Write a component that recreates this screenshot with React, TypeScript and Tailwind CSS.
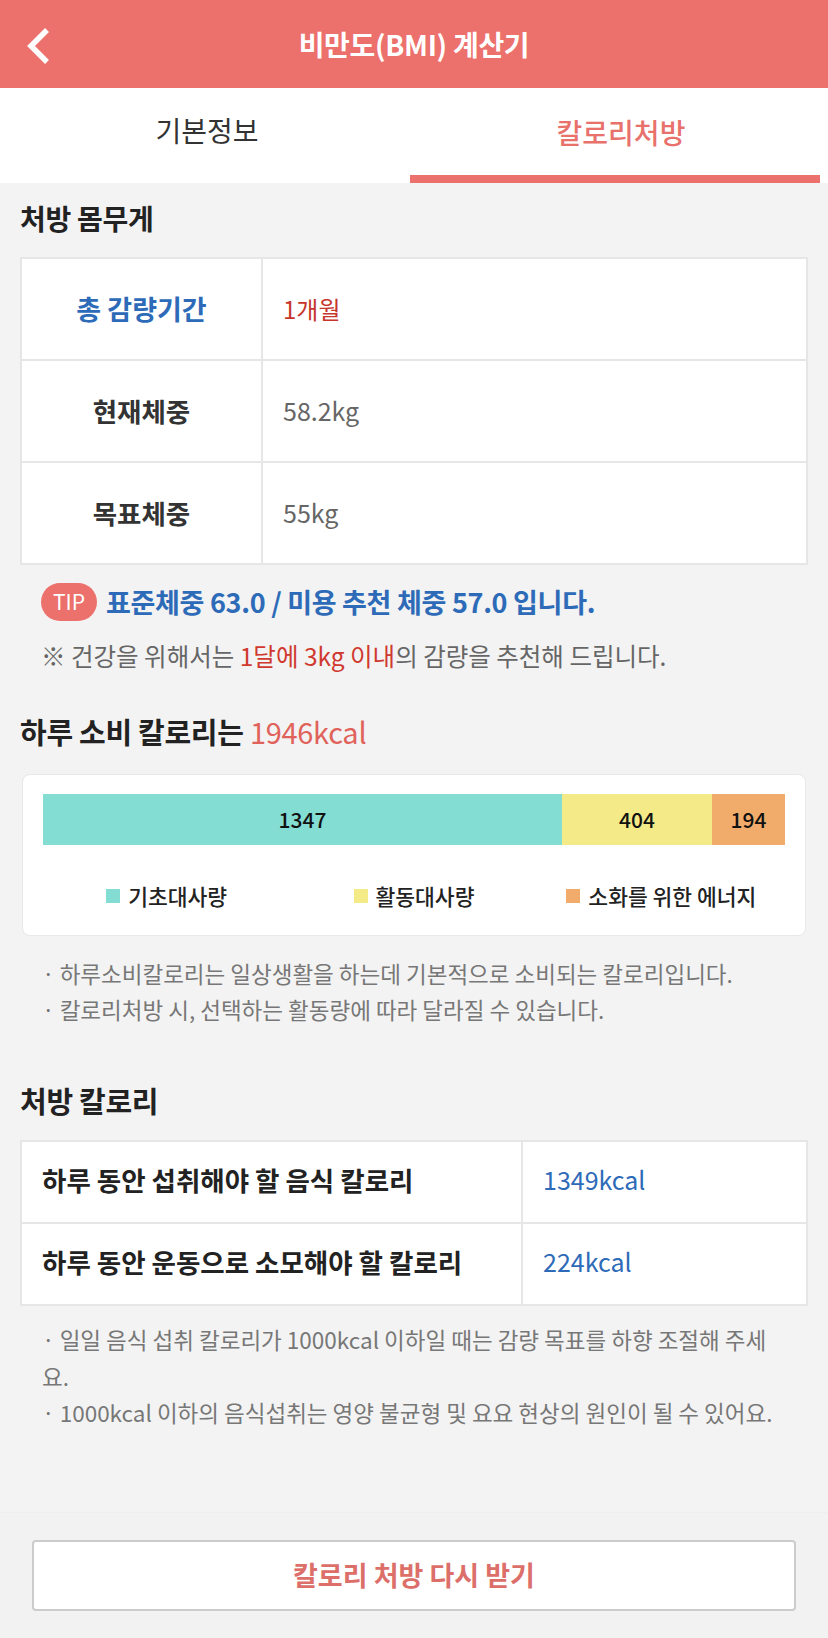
import React from "react";

const F = "font-['Noto_Sans_CJK_KR','Noto_Sans',sans-serif]";

function Header() {
  return (
    <div className="relative h-[88px] bg-[#EC706C] flex items-center justify-center">
      <svg className="absolute left-[24px] top-[27px]" width="28" height="38" viewBox="0 0 28 38">
        <polyline points="23,3 7,19 23,35" fill="none" stroke="#fff" strokeWidth="5.5" strokeLinecap="butt" strokeLinejoin="miter" />
      </svg>
      <div className="text-white text-[28px] font-semibold tracking-[-0.3px]">비만도(BMI) 계산기</div>
    </div>
  );
}

function Tabs() {
  return (
    <div className="h-[95px] bg-white flex">
      <div className="flex-1 flex items-center justify-center pb-[12px] text-[28px] text-[#333]">기본정보</div>
      <div className="flex-1 flex flex-col">
        <div className="flex-1 flex items-center justify-center text-[28px] text-[#E8716C] font-medium">칼로리처방</div>
        <div className="h-[8px] bg-[#EC706C] ml-[-4px] mr-[8px]" />
      </div>
    </div>
  );
}

export default function App() {
  return (
    <div className={`${F} w-[828px] min-h-[1638px] bg-[#F3F3F3] text-[#222]`}>
      <Header />
      <Tabs />
      <div className="px-[20px]">
        <div className="h-[70px] flex items-center text-[28px] font-semibold tracking-[-0.3px]">처방 몸무게</div>
        <table className="mt-[4px] w-[788px] border-collapse bg-white">
          <tbody>
            <tr className="h-[102px]">
              <td className="w-[241px] border-2 border-[#E6E6E6] text-center text-[27px] font-bold text-[#2D6BB8]">총 감량기간</td>
              <td className="border-2 border-[#E6E6E6] pl-[20px] text-[24px] text-[#C6362B]">1개월</td>
            </tr>
            <tr className="h-[102px]">
              <td className="border-2 border-[#E6E6E6] text-center text-[26.5px] font-bold text-[#333]">현재체중</td>
              <td className="border-2 border-[#E6E6E6] pl-[20px] text-[25px] text-[#666]">58.2kg</td>
            </tr>
            <tr className="h-[102px]">
              <td className="border-2 border-[#E6E6E6] text-center text-[26.5px] font-bold text-[#333]">목표체중</td>
              <td className="border-2 border-[#E6E6E6] pl-[20px] text-[25px] text-[#666]">55kg</td>
            </tr>
          </tbody>
        </table>
        <div className="h-[74px] flex items-center pl-[21px]">
          <span className="w-[56px] h-[38px] rounded-full bg-[#EC706C] text-white text-[21px] flex items-center justify-center">TIP</span>
          <span className="ml-[9px] text-[27px] font-bold text-[#2D6BB8] tracking-[-0.3px]">표준체중 63.0 / 미용 추천 체중 57.0 입니다.</span>
        </div>
        <div className="h-[34px] flex items-center pl-[21px] text-[24.5px] text-[#666]">
          ※ 건강을 위해서는&nbsp;<span className="text-[#D0392F]">1달에 3kg 이내</span>의 감량을 추천해 드립니다.
        </div>
        <div className="mt-[42px] h-[34px] flex items-center text-[29px] tracking-[-0.3px]">
          <span className="font-semibold">하루 소비 칼로리는&nbsp;</span>
          <span className="text-[#E0625A]">1946kcal</span>
        </div>
        <div className="mt-[25px] ml-[2px] w-[784px] bg-white rounded-[8px] border border-[#E8E8E8] px-[20px] pt-[19px] pb-[19px]">
          <div className="flex h-[51px] text-[21px] font-medium text-[#111]">
            <div className="w-[519px] bg-[#83DDD2] flex items-center justify-center">1347</div>
            <div className="w-[150px] bg-[#F4EA87] flex items-center justify-center">404</div>
            <div className="flex-1 bg-[#F1AC6C] flex items-center justify-center">194</div>
          </div>
          <div className="mt-[31px] h-[40px] grid grid-cols-3 text-[21.5px] font-medium text-[#222]">
            <div className="flex items-center justify-center gap-[8px]">
              <span className="w-[14px] h-[14px] bg-[#83DDD2]" />기초대사량
            </div>
            <div className="flex items-center justify-center gap-[8px]">
              <span className="w-[14px] h-[14px] bg-[#F4EA87]" />활동대사량
            </div>
            <div className="flex items-center justify-center gap-[8px]">
              <span className="w-[14px] h-[14px] bg-[#F1AC6C]" />소화를 위한 에너지
            </div>
          </div>
        </div>
        <div className="mt-[19px] pl-[22px] text-[22.5px] leading-[36px] text-[#777]">
          <div>· 하루소비칼로리는 일상생활을 하는데 기본적으로 소비되는 칼로리입니다.</div>
          <div>· 칼로리처방 시, 선택하는 활동량에 따라 달라질 수 있습니다.</div>
        </div>
        <div className="mt-[57px] h-[34px] flex items-center text-[29px] font-semibold tracking-[-0.3px]">처방 칼로리</div>
        <table className="mt-[22px] w-[788px] border-collapse bg-white">
          <tbody>
            <tr className="h-[82px]">
              <td className="w-[501px] border-2 border-[#E6E6E6] pl-[20px] pb-[4px] text-[26.5px] font-bold text-[#222]">하루 동안 섭취해야 할 음식 칼로리</td>
              <td className="border-2 border-[#E6E6E6] pl-[20px] pb-[4px] text-[25px] text-[#2D6BB8]">1349kcal</td>
            </tr>
            <tr className="h-[82px]">
              <td className="border-2 border-[#E6E6E6] pl-[20px] pb-[4px] text-[26.5px] font-bold text-[#222]">하루 동안 운동으로 소모해야 할 칼로리</td>
              <td className="border-2 border-[#E6E6E6] pl-[20px] pb-[4px] text-[25px] text-[#2D6BB8]">224kcal</td>
            </tr>
          </tbody>
        </table>
        <div className="mt-[15px] pl-[22px] text-[22.5px] leading-[36.5px] text-[#777]">
          <div>· 일일 음식 섭취 칼로리가 1000kcal 이하일 때는 감량 목표를 하향 조절해 주세<br />요.</div>
          <div className="whitespace-nowrap">· 1000kcal 이하의 음식섭취는 영양 불균형 및 요요 현상의 원인이 될 수 있어요.</div>
        </div>
      </div>
      <div className="mt-[81px] border-t border-[#EEEEEE] bg-[#F2F2F2] pt-[27px] pb-[26px] px-[32px]">
        <button className="w-[764px] h-[71px] bg-white border-2 border-[#CCCCCC] rounded-[4px] text-[27px] font-bold text-[#DC6F6A] flex items-center justify-center">
          칼로리 처방 다시 받기
        </button>
      </div>
    </div>
  );
}
